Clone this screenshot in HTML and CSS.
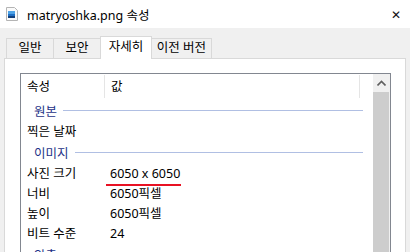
FILE: index.html
```html
<!DOCTYPE html>
<html lang="ko">
<head>
    <meta charset="UTF-8">
    <title>matryoshka.png 속성</title>
    <link rel="stylesheet" href="styles.css">
</head>
<body>
    <div class="titlebar">
        <svg class="file-icon" width="12" height="14" viewBox="0 0 12 14">
            <path d="M0.5 0.5H8.5L11.5 3.5V13.5H0.5Z" fill="#fafafa" stroke="#b4b4b4"/>
            <rect x="2" y="4" width="7" height="7" fill="#1f6fc4"/>
            <rect x="2" y="4" width="7" height="3" fill="#4fa3e6"/>
            <rect x="2" y="9" width="7" height="2" fill="#123f7a"/>
        </svg>
        <span class="title">matryoshka.png 속성</span>
        <span class="close">&#x2715;</span>
    </div>

    <div class="dialog">
        <div class="tabs">
            <div class="tab tab-general">일반</div>
            <div class="tab tab-security">보안</div>
            <div class="tab tab-details active">자세히</div>
            <div class="tab tab-versions">이전 버전</div>
        </div>

        <div class="panel">
            <div class="list">
                <div class="rows">
                    <div class="header">
                        <div class="col-name">속성</div>
                        <div class="col-value">값</div>
                    </div>
                    <div class="group"><span>원본</span></div>
                    <div class="row"><div class="col-name">찍은 날짜</div><div class="col-value"></div></div>
                    <div class="group"><span>이미지</span></div>
                    <div class="row"><div class="col-name">사진 크기</div><div class="col-value"><span class="marked">6050 x 6050</span></div></div>
                    <div class="row"><div class="col-name">너비</div><div class="col-value">6050픽셀</div></div>
                    <div class="row"><div class="col-name">높이</div><div class="col-value">6050픽셀</div></div>
                    <div class="row"><div class="col-name">비트 수준</div><div class="col-value">24</div></div>
                    <div class="group"><span>압축</span></div>
                </div>
                <div class="scrollbar">
                    <div class="scroll-up">
                        <svg width="9" height="6" viewBox="0 0 9 6"><path d="M0.5 5.5L4.5 1.5L8.5 5.5" fill="none" stroke="#606060" stroke-width="1.6"/></svg>
                    </div>
                    <div class="thumb"></div>
                </div>
            </div>
        </div>
    </div>
</body>
</html>
```

FILE: styles.css
```css
body {
    margin: 0;
    width: 410px;
    height: 252px;
    overflow: hidden;
    font-family: "Noto Sans", "Noto Sans CJK KR", sans-serif;
    font-size: 12px;
    color: #000;
    background-color: #f0f0f0;
}
.titlebar {
    height: 28px;
    background-color: #fff;
    display: flex;
    align-items: center;
    padding-left: 6px;
    padding-right: 9px;
}
.file-icon {
    margin-right: 9px;
}
.title {
    flex: 1;
    font-size: 12.5px;
}
.close {
    font-size: 12px;
    color: #111;
}
.dialog {
    padding-top: 8px;
}
.tabs {
    display: flex;
    align-items: flex-end;
    margin-left: 6px;
    height: 22px;
    font-size: 12.5px;
}
.tab {
    box-sizing: border-box;
    height: 20px;
    line-height: 18px;
    text-align: center;
    border: 1px solid #d9d9d9;
    border-bottom: none;
    border-right: none;
}
.tab-general {
    width: 47px;
}
.tab-security {
    width: 47px;
}
.tab-details {
    width: 52px;
}
.tab-versions {
    width: 60px;
    border-right: 1px solid #d9d9d9;
}
.tab.active {
    background-color: #fff;
    height: 23px;
    line-height: 20px;
    border-right: 1px solid #d9d9d9;
    margin-bottom: -1px;
    position: relative;
    z-index: 1;
}
.tab.active + .tab {
    border-left: none;
}
.panel {
    margin: 0 4px;
    height: 200px;
    background-color: #fff;
    border: 1px solid #d9d9d9;
    padding: 14px 14px 0 15px;
}
.list {
    display: flex;
    height: 190px;
    border: 1px solid #828790;
    border-bottom: none;
}
.rows {
    flex: 1;
}
.header {
    display: flex;
    height: 25px;
    align-items: center;
}
.header .col-name {
    border-right: 1px solid #e5e5e5;
    height: 23px;
    line-height: 24px;
}
.header .col-value {
    flex: none;
    width: 248px;
    border-right: 1px solid #e5e5e5;
    height: 23px;
    line-height: 24px;
}
.col-name {
    width: 77px;
    padding-left: 6px;
    font-size: 12.5px;
}
.col-value {
    flex: 1;
    padding-left: 6px;
    font-size: 12.5px;
}
.row {
    display: flex;
    height: 20px;
    line-height: 21px;
}
.group {
    display: flex;
    align-items: center;
    height: 22px;
    padding-left: 13px;
    margin-right: 10px;
    color: #1e3287;
    font-size: 12.5px;
}
.group::after {
    content: "";
    flex: 1;
    height: 1px;
    margin-left: 6px;
    background-color: #b0bfe3;
}
.marked {
    position: relative;
    display: inline-block;
}
.marked::after {
    content: "";
    position: absolute;
    left: -4px;
    right: -1px;
    bottom: -2px;
    height: 2px;
    background-color: #e81123;
}
.scrollbar {
    width: 17px;
    background-color: #f0f0f0;
    display: flex;
    flex-direction: column;
}
.scroll-up {
    height: 18px;
    display: flex;
    align-items: center;
    justify-content: center;
}
.thumb {
    flex: 1;
    margin: 0 1px 0 0;
    background-color: #cdcdcd;
}
```
